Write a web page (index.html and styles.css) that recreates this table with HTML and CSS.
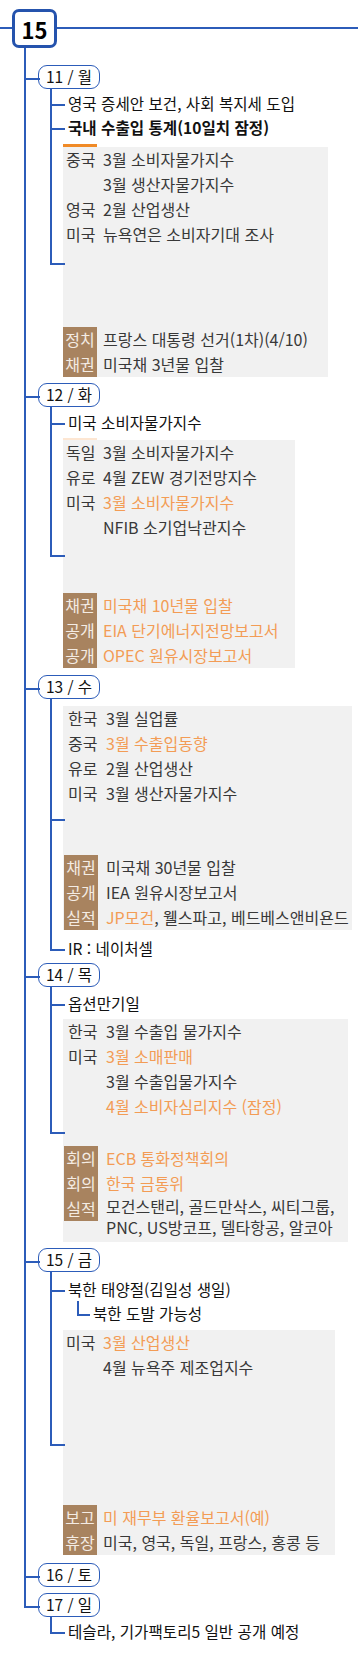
FILE: index.html
```html
<!DOCTYPE html>
<html lang="ko">
<head>
<meta charset="utf-8">
<title>15</title>
<link rel="stylesheet" href="styles.css">
</head>
<body>
<div class="page">
  <div class="header">
    <span class="hline short"></span>
    <div class="root">15</div>
    <span class="hline grow"></span>
  </div>
  <div class="tree">
    <div class="day g17">
      <div class="pill">11 / 월</div>
      <div class="node g2"><div class="lbl txt">영국 증세안 보건, 사회 복지세 도입</div></div>
      <div class="node"><div class="lbl txt bold">국내 수출입 통계(10일치 잠정)</div></div>
      <div class="node g8">
        <div class="lbl box b1">
          <span class="mark"></span>
          <div class="rows">
            <div class="row"><span class="k">중국</span><span class="v">3월 소비자물가지수</span></div>
            <div class="row"><span class="k"></span><span class="v">3월 생산자물가지수</span></div>
            <div class="row"><span class="k">영국</span><span class="v">2월 산업생산</span></div>
            <div class="row"><span class="k">미국</span><span class="v">뉴욕연은 소비자기대 조사</span></div>
          </div>
          <div class="tags">
            <div class="row"><span class="tag">정치</span><span class="v">프랑스 대통령 선거(1차)(4/10)</span></div>
            <div class="row"><span class="tag">채권</span><span class="v">미국채 3년물 입찰</span></div>
          </div>
        </div>
      </div>
    </div>

    <div class="day g6">
      <div class="pill">12 / 화</div>
      <div class="node g3"><div class="lbl txt">미국 소비자물가지수</div></div>
      <div class="node g6">
        <div class="lbl box b2">
          <span class="mark faint"></span>
          <div class="rows">
            <div class="row"><span class="k">독일</span><span class="v">3월 소비자물가지수</span></div>
            <div class="row"><span class="k">유로</span><span class="v">4월 ZEW 경기전망지수</span></div>
            <div class="row"><span class="k">미국</span><span class="v o">3월 소비자물가지수</span></div>
            <div class="row"><span class="k"></span><span class="v">NFIB 소기업낙관지수</span></div>
          </div>
          <div class="tags">
            <div class="row"><span class="tag">채권</span><span class="v o">미국채 10년물 입찰</span></div>
            <div class="row"><span class="tag">공개</span><span class="v o">EIA 단기에너지전망보고서</span></div>
            <div class="row"><span class="tag">공개</span><span class="v o">OPEC 원유시장보고서</span></div>
          </div>
        </div>
      </div>
    </div>

    <div class="day g7">
      <div class="pill">13 / 수</div>
      <div class="node g7">
        <div class="lbl box b3">
          <div class="rows">
            <div class="row"><span class="k">한국</span><span class="v">3월 실업률</span></div>
            <div class="row"><span class="k">중국</span><span class="v o">3월 수출입동향</span></div>
            <div class="row"><span class="k">유로</span><span class="v">2월 산업생산</span></div>
            <div class="row"><span class="k">미국</span><span class="v">3월 생산자물가지수</span></div>
          </div>
          <div class="tags">
            <div class="row"><span class="tag">채권</span><span class="v">미국채 30년물 입찰</span></div>
            <div class="row"><span class="tag">공개</span><span class="v">IEA 원유시장보고서</span></div>
            <div class="row"><span class="tag">실적</span><span class="v"><span class="o">JP모건</span>, 웰스파고, 베드베스앤비욘드</span></div>
          </div>
        </div>
      </div>
      <div class="node g6"><div class="lbl txt">IR : 네이처셀</div></div>
    </div>

    <div class="day g3">
      <div class="pill">14 / 목</div>
      <div class="node g4"><div class="lbl txt">옵션만기일</div></div>
      <div class="node g4">
        <div class="lbl box b4">
          <div class="rows">
            <div class="row"><span class="k">한국</span><span class="v">3월 수출입 물가지수</span></div>
            <div class="row"><span class="k">미국</span><span class="v o">3월 소매판매</span></div>
            <div class="row"><span class="k"></span><span class="v">3월 수출입물가지수</span></div>
            <div class="row"><span class="k"></span><span class="v o">4월 소비자심리지수 (잠정)</span></div>
          </div>
          <div class="tags">
            <div class="row"><span class="tag">회의</span><span class="v o">ECB 통화정책회의</span></div>
            <div class="row"><span class="tag">회의</span><span class="v o">한국 금통위</span></div>
            <div class="row multi"><span class="tag">실적</span><span class="v">모건스탠리, 골드만삭스, 씨티그룹,<br>PNC, US방코프, 델타항공, 알코아</span></div>
          </div>
        </div>
      </div>
    </div>

    <div class="day g6">
      <div class="pill">15 / 금</div>
      <div class="node g5">
        <div class="lbl txt">북한 태양절(김일성 생일)</div>
        <div class="node"><div class="lbl txt">북한 도발 가능성</div></div>
      </div>
      <div class="node g5">
        <div class="lbl box b5">
          <div class="rows">
            <div class="row"><span class="k">미국</span><span class="v o">3월 산업생산</span></div>
            <div class="row"><span class="k"></span><span class="v">4월 뉴욕주 제조업지수</span></div>
          </div>
          <div class="tags">
            <div class="row"><span class="tag">보고</span><span class="v o">미 재무부 환율보고서(예)</span></div>
            <div class="row"><span class="tag">휴장</span><span class="v">미국, 영국, 독일, 프랑스, 홍콩 등</span></div>
          </div>
        </div>
      </div>
    </div>

    <div class="day g8">
      <div class="pill">16 / 토</div>
    </div>

    <div class="day g6">
      <div class="pill">17 / 일</div>
      <div class="node g2"><div class="lbl txt">테슬라, 기가팩토리5 일반 공개 예정</div></div>
    </div>
  </div>
</div>
</body>
</html>
```
FILE: styles.css
```css
* { box-sizing: border-box; }

:root { --blue: #2c5cb9; }

body {
  margin: 0;
  background: #fff;
  font-family: "Noto Sans CJK KR", "Noto Sans", sans-serif;
}

.page {
  width: 358px;
  height: 1672px;
  overflow: hidden;
}

/* header */
.header {
  display: flex;
  align-items: flex-start;
  height: 48px;
}
.hline {
  height: 2px;
  margin-top: 27px;
  background: var(--blue);
}
.hline.short { width: 12px; }
.hline.grow { flex: 1; }

.root {
  width: 45px;
  height: 39px;
  margin-top: 9px;
  border: 3px solid #2553ad;
  border-radius: 7px;
  background: #fff;
  display: flex;
  align-items: center;
  justify-content: center;
  font-size: 22px;
  font-weight: bold;
  color: #000;
  line-height: 1;
}

/* tree */
.day {
  --g: 0px;
  position: relative;
  margin-left: 38px;
  margin-top: var(--g);
}
.node {
  --g: 0px;
  position: relative;
  margin-left: 25px;
  margin-top: var(--g);
}
.g2 { --g: 2px; }
.g3 { --g: 3px; }
.g4 { --g: 4px; }
.g5 { --g: 5px; }
.g6 { --g: 6px; }
.g7 { --g: 7px; }
.g8 { --g: 8px; }
.g17 { --g: 17px; }

.day:not(:last-child)::after {
  content: "";
  position: absolute;
  left: -14px;
  top: 0;
  bottom: 0;
  width: 2px;
  background: var(--blue);
}

.pill {
  position: relative;
  width: 62px;
  height: 24px;
  border: 1.5px solid var(--blue);
  border-radius: 9px;
  background: #fff;
  font-size: 15.5px;
  line-height: 20px;
  text-align: center;
  color: #111;
  white-space: nowrap;
}
.pill::before {
  content: "";
  position: absolute;
  left: -15.5px;
  top: calc(-1.5px - var(--g));
  width: 14px;
  height: calc(var(--g) + 13px);
  border-left: 2px solid var(--blue);
  border-bottom: 2px solid var(--blue);
}

.lbl { position: relative; }
.node > .lbl::before {
  content: "";
  position: absolute;
  left: -13px;
  top: calc(-1 * var(--g));
  width: 13px;
  height: calc(50% + var(--g) + 1px);
  border-left: 2px solid var(--blue);
  border-bottom: 2px solid var(--blue);
}
.node:not(:last-child)::after {
  content: "";
  position: absolute;
  left: -13px;
  top: 0;
  bottom: 0;
  width: 2px;
  background: var(--blue);
}
.node .node > .lbl::before {
  left: -11px;
  width: 11px;
}

.txt {
  height: 24px;
  line-height: 24px;
  padding-left: 5px;
  font-size: 15.6px;
  color: #111;
  white-space: nowrap;
}
.bold { font-weight: bold; }

/* boxes */
.box {
  display: flex;
  flex-direction: column;
  background: #f1f1f1;
  color: #383838;
  font-size: 16px;
}
.b1 { width: 265px; height: 230px; }
.b2 { width: 232px; height: 228px; }
.b3 { width: 289px; height: 224px; }
.b4 { width: 285px; height: 223px; padding-bottom: 4px; }
.b5 { width: 272px; height: 225px; }

.mark {
  position: absolute;
  left: 0;
  top: -3px;
  width: 34px;
  height: 3px;
  background: #f08a26;
}
.mark.faint { background: #fde6d2; height: 2px; top: -2px; }

.row {
  display: flex;
  line-height: 25px;
  white-space: nowrap;
}
.k {
  flex: none;
  width: 40px;
  padding-left: 3px;
}
.tags { margin-top: auto; }
.tag {
  flex: none;
  width: 34px;
  height: 25px;
  margin-right: 6px;
  background: #a8835f;
  color: #f4ece4;
  text-align: center;
}
.row.multi { align-items: flex-start; }
.row.multi .v { line-height: 21px; }

.b3 .k, .b4 .k { width: 43px; padding-left: 5px; }
.b3 .tag, .b4 .tag { margin-left: 1px; margin-right: 8px; }

.o { color: #f39c55; }
```
